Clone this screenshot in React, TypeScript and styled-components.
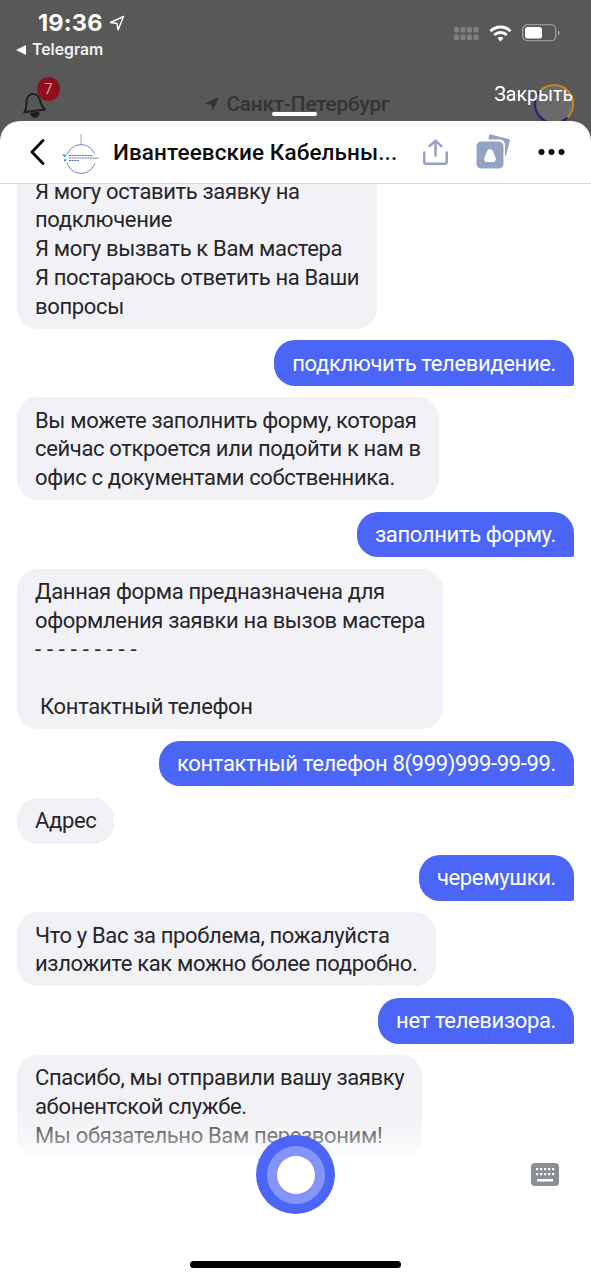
import React from "react";
import styled, { createGlobalStyle } from "styled-components";

const Global = createGlobalStyle`
  html, body { margin: 0; padding: 0; background: #585858; }
  * { box-sizing: border-box; }
`;
const FONT = `Roboto, "Noto Sans", sans-serif`;

const Page = styled.div`
  width: 591px; height: 1280px; display: flex; flex-direction: column; overflow: hidden;
  font-family: ${FONT}; background: #585858;
`;
const Top = styled.div`
  height: 121px; flex: none; display: flex; flex-direction: column; position: relative; overflow: hidden;
`;
const StatusRow = styled.div`
  display: flex; align-items: center; height: 30px; margin-top: 8px; padding: 0 31px 0 38px; gap: 6px;
`;
const Time = styled.span`
  font: 700 23.5px/30px Inter, ${FONT}; color: #fff; letter-spacing: 0.2px;
`;
const StatusRight = styled.div`
  margin-left: auto; margin-top: 20px; display: flex; align-items: center; gap: 10px;
`;
const BackRow = styled.div`
  display: flex; align-items: center; gap: 6px; height: 20px; margin-top: 2px; padding-left: 16px;
  font: 600 15.8px/20px Inter, ${FONT}; color: #f2f2f2;
`;
const Tri = styled.span`
  width: 0; height: 0; border-style: solid; border-width: 5px 10px 5px 0; border-color: transparent #fff transparent transparent;
`;
const NavRow = styled.div`
  flex: 1; display: grid; grid-template-columns: 1fr auto 1fr; align-items: start; padding: 0 18px 0 21px; margin-top: 20px;
`;
const BellWrap = styled.div`
  position: relative; width: 24px; height: 30px; margin-top: 8px;
`;
const Badge = styled.span`
  position: absolute; left: 16px; top: -11px; width: 23px; height: 24px; border-radius: 50%; background: #8f0f1e;
  color: #c9a0a4; font: 400 15px/24px ${FONT}; text-align: center;
`;
const City = styled.div`
  display: flex; align-items: center; gap: 6px; margin-top: 11px; position: relative;
  font: 500 20.8px/26px ${FONT}; color: #333436; letter-spacing: -0.2px;
`;
const Progress = styled.span`
  position: absolute; left: 68px; top: 21px; width: 45px; height: 4px; border-radius: 2px; background: #fff;
`;
const CloseCell = styled.div`
  justify-self: end; position: relative; margin-top: 3px;
  font: 400 19.5px/24px ${FONT}; color: #fff;
`;
const Ring = styled.span`
  position: absolute; right: -1px; top: 1px; width: 40px; height: 40px; border-radius: 50%;
  border: 2px solid; border-color: #c98a1a #c98a1a #1f1d78 #1f1d78; background: #6a6a6a;
`;
const CloseText = styled.span`position: relative;`;

const Sheet = styled.div`
  flex: 1; min-height: 0; display: flex; flex-direction: column; background: #fff; border-radius: 20px 20px 0 0; position: relative;
`;
const Header = styled.div`
  height: 63px; flex: none; display: flex; align-items: center; padding: 0 26px 0 28px; border-bottom: 1px solid #d9d9d9;
`;
const Back = styled.svg`width: 20px; height: 28px; flex: none; margin-right: 10px;`;
const Logo = styled.svg`width: 50px; height: 50px; flex: none; margin-right: 5px; margin-top: -3px;`;
const Title = styled.div`
  font: 500 22.5px/30px ${FONT}; color: #0c0c0c; white-space: nowrap; width: 295px; letter-spacing: 0.1px;
`;
const Actions = styled.div`
  margin-left: auto; display: flex; align-items: center; gap: 26px;
`;
const Chat = styled.div`
  flex: 1; min-height: 0; overflow: hidden; display: flex; flex-direction: column; justify-content: flex-end; gap: 11.4px;
  padding: 0 17px;
`;
const Bubble = styled.div<{ $me?: boolean }>`
  flex: none; align-self: ${p => (p.$me ? "flex-end" : "flex-start")};
  padding: 9.5px 18px 7.5px; font: 400 22px/28.7px ${FONT}; letter-spacing: -0.35px; white-space: pre-wrap;
  border-radius: ${p => (p.$me ? "21px 21px 2px 21px" : "21px")};
  background: ${p => (p.$me ? "#4b66f7" : "#f1f1f6")};
  color: ${p => (p.$me ? "#fff" : "#26262a")};
`;
const Dashes = styled.span`letter-spacing: 0.2px;`;
const Footer = styled.div`
  height: 122px; flex: none; position: relative; display: flex; flex-direction: column; align-items: center;
`;
const Fade = styled.div`
  position: absolute; left: 0; right: 0; top: -48px; height: 48px;
  background: linear-gradient(rgba(255,255,255,0), rgba(255,255,255,0.75));
`;
const Mic = styled.div`
  position: absolute; left: 256px; top: -23px; width: 79px; height: 79px; border-radius: 50%;
  background: #4b66f7; display: flex; align-items: center; justify-content: center;
`;
const MicInner = styled.div`
  width: 58px; height: 58px; border-radius: 50%; background: #8594f8; display: flex; align-items: center; justify-content: center;
`;
const MicCore = styled.div`width: 38px; height: 38px; border-radius: 50%; background: #fff;`;
const Keyboard = styled.svg`position: absolute; left: 530px; top: 5px; width: 30px; height: 23px;`;
const HomeBar = styled.div`
  position: absolute; left: 190px; bottom: 12px; width: 211px; height: 7px; border-radius: 4px; background: #000;
`;

const me = (t: string) => <Bubble $me>{t}</Bubble>;
const bot = (t: string) => <Bubble>{t}</Bubble>;

export default function App() {
  return (
    <Page>
      <Global />
      <Top>
        <StatusRow>
          <Time>19:36</Time>
          <svg width="16" height="16" viewBox="0 0 16 16" fill="none" stroke="#fff" strokeWidth="1.4" strokeLinejoin="round">
            <path d="M14.5 1.5 1.5 7.5l6.5 1 1 6.5z" />
          </svg>
          <StatusRight>
            <svg width="25" height="13" viewBox="0 0 25 13" fill="#7f7f7f">
              {[0, 1].map(r => [0, 1, 2, 3].map(c => <rect key={`${r}${c}`} x={c * 6.5} y={r * 7.5} width="5" height="5.5" rx="1.2" />))}
            </svg>
            <svg width="23" height="17" viewBox="0 0 23 17" fill="none" stroke="#fff" strokeWidth="3">
              <path d="M1.5 6.2a14 14 0 0 1 20 0" />
              <path d="M5.2 10a9 9 0 0 1 12.6 0" />
              <path d="M11.5 16.500 8.500 13a4.500 4.500 0 0 1 6 0z" fill="#fff" stroke="none" />
            </svg>
            <svg width="38" height="18" viewBox="0 0 38 18" fill="none">
              <rect x="0.750" y="0.750" width="33" height="16" rx="4.500" stroke="#a8a8a8" strokeWidth="1.200" />
              <rect x="3" y="3" width="17" height="11.500" rx="2.500" fill="#fff" />
              <path d="M36 6.500c1.200.4 1.500 1.300 1.500 2.500s-.3 2-1.500 2.500z" fill="#a8a8a8" />
            </svg>
          </StatusRight>
        </StatusRow>
        <BackRow><Tri />Telegram</BackRow>
        <NavRow>
          <BellWrap>
            <svg width="25" height="30" viewBox="0 0 25 30" fill="none" stroke="#1e1e1e" strokeWidth="2" strokeLinejoin="round">
              <g transform="rotate(-8 12 15)">
                <path d="M2 23c3-3 3-5 3.500-9 .5-5 3.500-8 7-8s6.500 3 7 8c.5 4 .5 6 3.500 9z" />
                <path d="M9 25.500a3.500 3.500 0 0 0 7 0z" fill="#1e1e1e" />
              </g>
            </svg>
            <Badge>7</Badge>
          </BellWrap>
          <City>
            <svg width="16" height="16" viewBox="0 0 16 16" fill="#333436"><path d="M15 1 1 7.500l6.500 1.200L9 15z" /></svg>
            Санкт-Петербург
            <Progress />
          </City>
          <CloseCell>
            <Ring />
            <CloseText>Закрыть</CloseText>
          </CloseCell>
        </NavRow>
      </Top>
      <Sheet>
        <Header>
          <Back viewBox="0 0 20 28" fill="none" stroke="#0c0c0c" strokeWidth="3" strokeLinecap="round" strokeLinejoin="round">
            <path d="M15 2.500 4 14l11 11.500" />
          </Back>
          <Logo viewBox="0 0 50 50" fill="none">
            <path d="M23 8v10" stroke="#8a92b8" strokeWidth="0.800" />
            <circle cx="23" cy="33" r="14.500" stroke="#6c76b0" strokeWidth="0.900" />
            <rect x="6" y="28" width="36" height="9" fill="#fff" />
            <path d="M4 28.500h5l-2.500 3z" fill="#22a5d8" />
            <path d="M6 33.500h3l-2.500 2z" fill="#1f4fa0" />
            <path d="M11 29.500h24M11 32h30M11 34.500h10" stroke="#5a72a8" strokeWidth="1" strokeDasharray="2 .6" />
          </Logo>
          <Title>Ивантеевские Кабельны...</Title>
          <Actions>
            <svg width="27" height="28" viewBox="0 0 30 30" fill="none" stroke="#95a3c2" strokeWidth="2.800" strokeLinecap="round" strokeLinejoin="round">
              <path d="M15 19V2.500M8.500 8.500 15 2.500l6.500 6" />
              <path d="M2.500 15.500V26c0 1.200.8 2 2 2h21c1.200 0 2-.8 2-2V15.500" />
            </svg>
            <svg width="37" height="36" viewBox="0 0 37 36" fill="#95a3c2">
              <path d="M14 1.500c.3-1 1-1.400 2-1.100l17.500 4.700c1 .3 1.500 1.100 1.200 2.100l-3.700 14.500c-.5 1-1 .6-1-.3V11c0-3.500-2.300-5.500-5.500-5.500H13.500z" />
              <path fillRule="evenodd" d="M6.500 7.500h17c3 0 5 2 5 5v17c0 3-2 5-5 5h-17c-3 0-5-2-5-5v-17c0-3 2-5 5-5zM15 15c-1.500 0-2.400 1.200-3.200 3l-2.300 5.500c-.9 2.500.4 4.500 2.500 4.500h6c2.100 0 3.400-2 2.500-4.500L18.200 18c-.8-1.800-1.700-3-3.200-3z" />
            </svg>
            <svg width="27" height="8" viewBox="0 0 27 8" fill="#0c0c0c">
              <circle cx="3.500" cy="4" r="3" /><circle cx="13.500" cy="4" r="3" /><circle cx="23.500" cy="4" r="3" />
            </svg>
          </Actions>
        </Header>
        <Chat>
          {bot("Я могу оставить заявку на\nподключение\nЯ могу вызвать к Вам мастера\nЯ постараюсь ответить на Ваши\nвопросы")}
          {me("подключить телевидение.")}
          {bot("Вы можете заполнить форму, которая\nсейчас откроется или подойти к нам в\nофис с документами собственника.")}
          {me("заполнить форму.")}
          <Bubble>
            {"Данная форма предназначена для\nоформления заявки на вызов мастера\n"}
            <Dashes>- - - - - - - - -</Dashes>
            {"\n\n Контактный телефон"}
          </Bubble>
          {me("контактный телефон 8(999)999-99-99.")}
          {bot("Адрес")}
          {me("черемушки.")}
          {bot("Что у Вас за проблема, пожалуйста\nизложите как можно более подробно.")}
          {me("нет телевизора.")}
          {bot("Спасибо, мы отправили вашу заявку\nабонентской службе.\nМы обязательно Вам перезвоним!")}
        </Chat>
        <Footer>
          <Fade />
          <Mic><MicInner><MicCore /></MicInner></Mic>
          <Keyboard viewBox="0 0 30 23">
            <rect x="1" y="0" width="28" height="23" rx="4" fill="#8a8f96" />
            <g fill="#fff">
              {[0, 1, 2, 3, 4].map(i => <rect key={i} x={6 + i * 4} y="5" width="2.200" height="2.200" />)}
              {[0, 1, 2, 3, 4].map(i => <rect key={i} x={6 + i * 4} y="10" width="2.200" height="2.200" />)}
              <rect x="7" y="16" width="16" height="2.500" />
            </g>
          </Keyboard>
          <HomeBar />
        </Footer>
      </Sheet>
    </Page>
  );
}
